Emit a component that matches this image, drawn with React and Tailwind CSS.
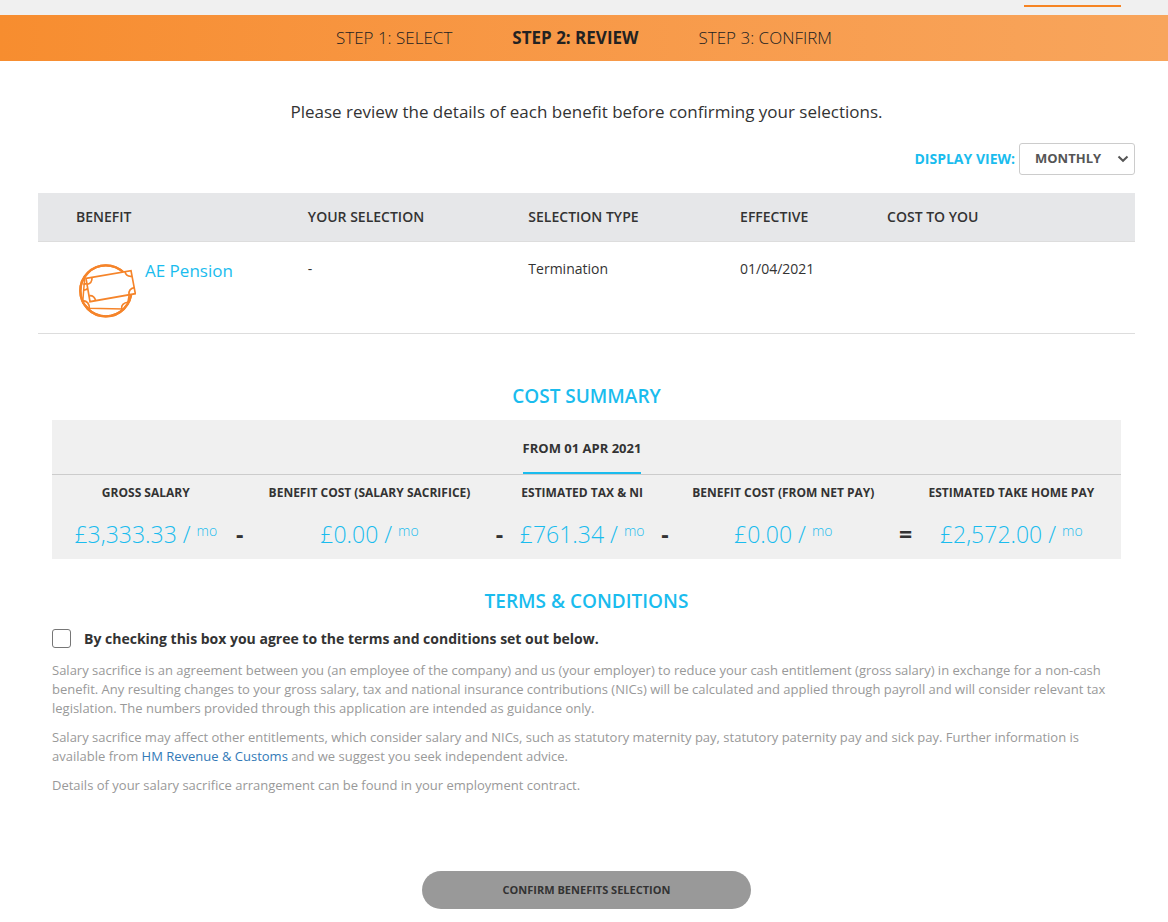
const steps = [
  { label: "STEP 1: SELECT" },
  { label: "STEP 2: REVIEW", current: true },
  { label: "STEP 3: CONFIRM" },
];

const summary = [
  { label: "GROSS SALARY", value: "£3,333.33", operator: "-", pad: "pl-2" },
  { label: "BENEFIT COST (SALARY SACRIFICE)", value: "£0.00", operator: "-", pad: "" },
  { label: "ESTIMATED TAX & NI", value: "£761.34", operator: "-", pad: "" },
  { label: "BENEFIT COST (FROM NET PAY)", value: "£0.00", operator: "=", pad: "pr-1" },
  { label: "ESTIMATED TAKE HOME PAY", value: "£2,572.00", pad: "pr-3" },
];

function PensionIcon() {
  return (
    <svg viewBox="54 39 174 168" className="h-14 w-[58px] shrink-0" fill="none" stroke="#f5842a" aria-hidden="true">
      <circle cx="137.500" cy="122.500" r="76.500" strokeWidth="7" />
      <path d="M74 84L68 158L86 175L190 177L203 160L208 132" fill="#fff" strokeWidth="4.500" />
      <path d="M69 152Q88 154 88 175M185 177Q182 160 206 156M70 103L80 101M69 120Q80 121 84 114" strokeWidth="5" />
      <circle cx="137.500" cy="122.500" r="76.500" strokeWidth="7" />
      <path d="M78 85L213 62L226 131L90 155Z" fill="#fff" strokeWidth="5" />
      <path d="M96 82Q97 100 81 103M195 65Q198 81 216 79M88 137Q103 136 107 152M223 113Q205 117 207 134" strokeWidth="5" />
    </svg>
  );
}

export default function App() {
  return (
    <div className="bg-white font-['Open_Sans',sans-serif] text-[#333]">
      <header className="flex h-[15px] justify-end bg-[#f0f0f0] pt-[5px] pr-[47px]">
        <div className="h-[2px] w-[97px] bg-[#f68423]" />
      </header>
      <nav aria-label="Progress" className="bg-linear-to-r from-[#f78d2f] to-[#f8a55c]">
        <ol className="flex h-[46px] items-center justify-center gap-[60px] text-[17px] text-[#222]">
          {steps.map((step) => (
            <li key={step.label} aria-current={step.current ? "step" : undefined} className={step.current ? "font-bold" : "font-light"}>
              {step.label}
            </li>
          ))}
        </ol>
      </nav>

      <main className="pr-[33px] pb-[13px] pl-[38px]">
        <p className="pt-[38px] text-center text-[17px] leading-[26px]">
          Please review the details of each benefit before confirming your selections.
        </p>

        <div className="mt-[18px] flex items-center justify-end gap-1">
          <label htmlFor="view" className="text-sm font-bold text-[#1abcee]">DISPLAY VIEW:</label>
          <div className="grid items-center">
            <select
              id="view"
              className="col-start-1 row-start-1 h-8 w-[116px] appearance-none rounded-[3px] border border-[#ccc] bg-white pl-[15px] text-[13px] font-bold text-[#555]"
            >
              <option>MONTHLY</option>
              <option>ANNUAL</option>
            </select>
            <svg viewBox="0 0 12 8" className="pointer-events-none col-start-1 row-start-1 mr-[6px] h-2 w-3 justify-self-end" fill="none" stroke="#555" strokeWidth="2" aria-hidden="true">
              <path d="M1.500 1.500L6 5.800L10.500 1.500" />
            </svg>
          </div>
        </div>

        <table className="mt-[18px] w-full table-fixed text-left">
          <thead className="border-b border-[#ddd] bg-[#e6e7e9] text-sm">
            <tr className="h-12">
              <th className="w-[24.6%] pl-[38px] font-semibold">BENEFIT</th>
              <th className="w-[20.1%] font-semibold">YOUR SELECTION</th>
              <th className="w-[19.3%] font-semibold">SELECTION TYPE</th>
              <th className="w-[13.4%] font-semibold">EFFECTIVE</th>
              <th className="font-semibold">COST TO YOU</th>
            </tr>
          </thead>
          <tbody>
            <tr className="border-b border-[#ddd] align-top text-sm leading-5">
              <td className="pt-[19px] pb-[14px] pl-10">
                <a href="#pension" className="flex gap-[9px] text-[17px] text-[#1abcee]">
                  <span className="pt-[2px]"><PensionIcon /></span>
                  <span className="leading-5">AE Pension</span>
                </a>
              </td>
              <td className="pt-[17px]">-</td>
              <td className="pt-[17px]">Termination</td>
              <td className="pt-[17px]">01/04/2021</td>
              <td />
            </tr>
          </tbody>
        </table>

        <div className="px-[14px]">
          <h2 className="mt-[48px] text-center text-[19px] leading-7 font-semibold text-[#1abcee]">COST SUMMARY</h2>
          <section className="mt-[10px] bg-[#f0f0f0]">
            <div className="flex h-[55px] justify-center border-b border-[#ccc] pr-[9px]">
              <button type="button" className="border-b-2 border-[#1abcee] pt-[6px] text-[13px] font-bold">FROM 01 APR 2021</button>
            </div>
            <table className="w-full table-fixed text-center">
              <colgroup>
                <col className="w-[16.800%]" />
                <col className="w-[1.500%]" />
                <col className="w-[22.800%]" />
                <col className="w-[1.500%]" />
                <col className="w-[14%]" />
                <col className="w-[1.500%]" />
                <col className="w-[21%]" />
                <col className="w-[1.500%]" />
                <col />
              </colgroup>
              <thead>
                <tr className="h-9 text-xs">
                  {summary.map((item) => [
                    <th key={item.label} className={`font-bold whitespace-nowrap ${item.pad}`}>{item.label}</th>,
                    item.operator && <td key={`${item.label} op`} />,
                  ])}
                </tr>
              </thead>
              <tbody>
                <tr className="h-12 align-top text-[23px] leading-[46px]">
                  {summary.map((item) => [
                    <td key={item.label} className={`font-light whitespace-nowrap text-[#1abcee] ${item.pad}`}>
                      {item.value} / <sup className="text-sm leading-none">mo</sup>
                    </td>,
                    item.operator && <td key={`${item.label} op`} className="font-bold">{item.operator}</td>,
                  ])}
                </tr>
              </tbody>
            </table>
          </section>

          <h2 className="mt-7 text-center text-[19px] leading-7 font-semibold text-[#1abcee]">TERMS &amp; CONDITIONS</h2>
          <div className="mt-[14px] flex items-center gap-[13px]">
            <input id="agree" type="checkbox" className="size-[19px] appearance-none rounded-[3px] border border-[#767676] bg-white checked:bg-[#1abcee]" />
            <label htmlFor="agree" className="text-sm leading-5 font-bold">
              By checking this box you agree to the terms and conditions set out below.
            </label>
          </div>
          <div className="mt-3 space-y-[10px] text-[13px] leading-[19px] text-[#999]">
            <p>
              Salary sacrifice is an agreement between you (an employee of the company) and us (your employer) to reduce your cash entitlement (gross salary) in exchange for a non-cash benefit. Any resulting changes to your gross salary, tax and national insurance contributions (NICs) will be calculated and applied through payroll and will consider relevant tax legislation. The numbers provided through this application are intended as guidance only.
            </p>
            <p>
              Salary sacrifice may affect other entitlements, which consider salary and NICs, such as statutory maternity pay, statutory paternity pay and sick pay. Further information is available from <a href="#hmrc" className="text-[#337ab7]">HM Revenue &amp; Customs</a> and we suggest you seek independent advice.
            </p>
            <p>Details of your salary sacrifice arrangement can be found in your employment contract.</p>
          </div>
        </div>

        <div className="mt-[76px] flex justify-center">
          <button type="button" className="h-[38px] w-[329px] rounded-full bg-[#999] pt-[2px] text-[11px] font-bold">
            CONFIRM BENEFITS SELECTION
          </button>
        </div>
      </main>
    </div>
  );
}
